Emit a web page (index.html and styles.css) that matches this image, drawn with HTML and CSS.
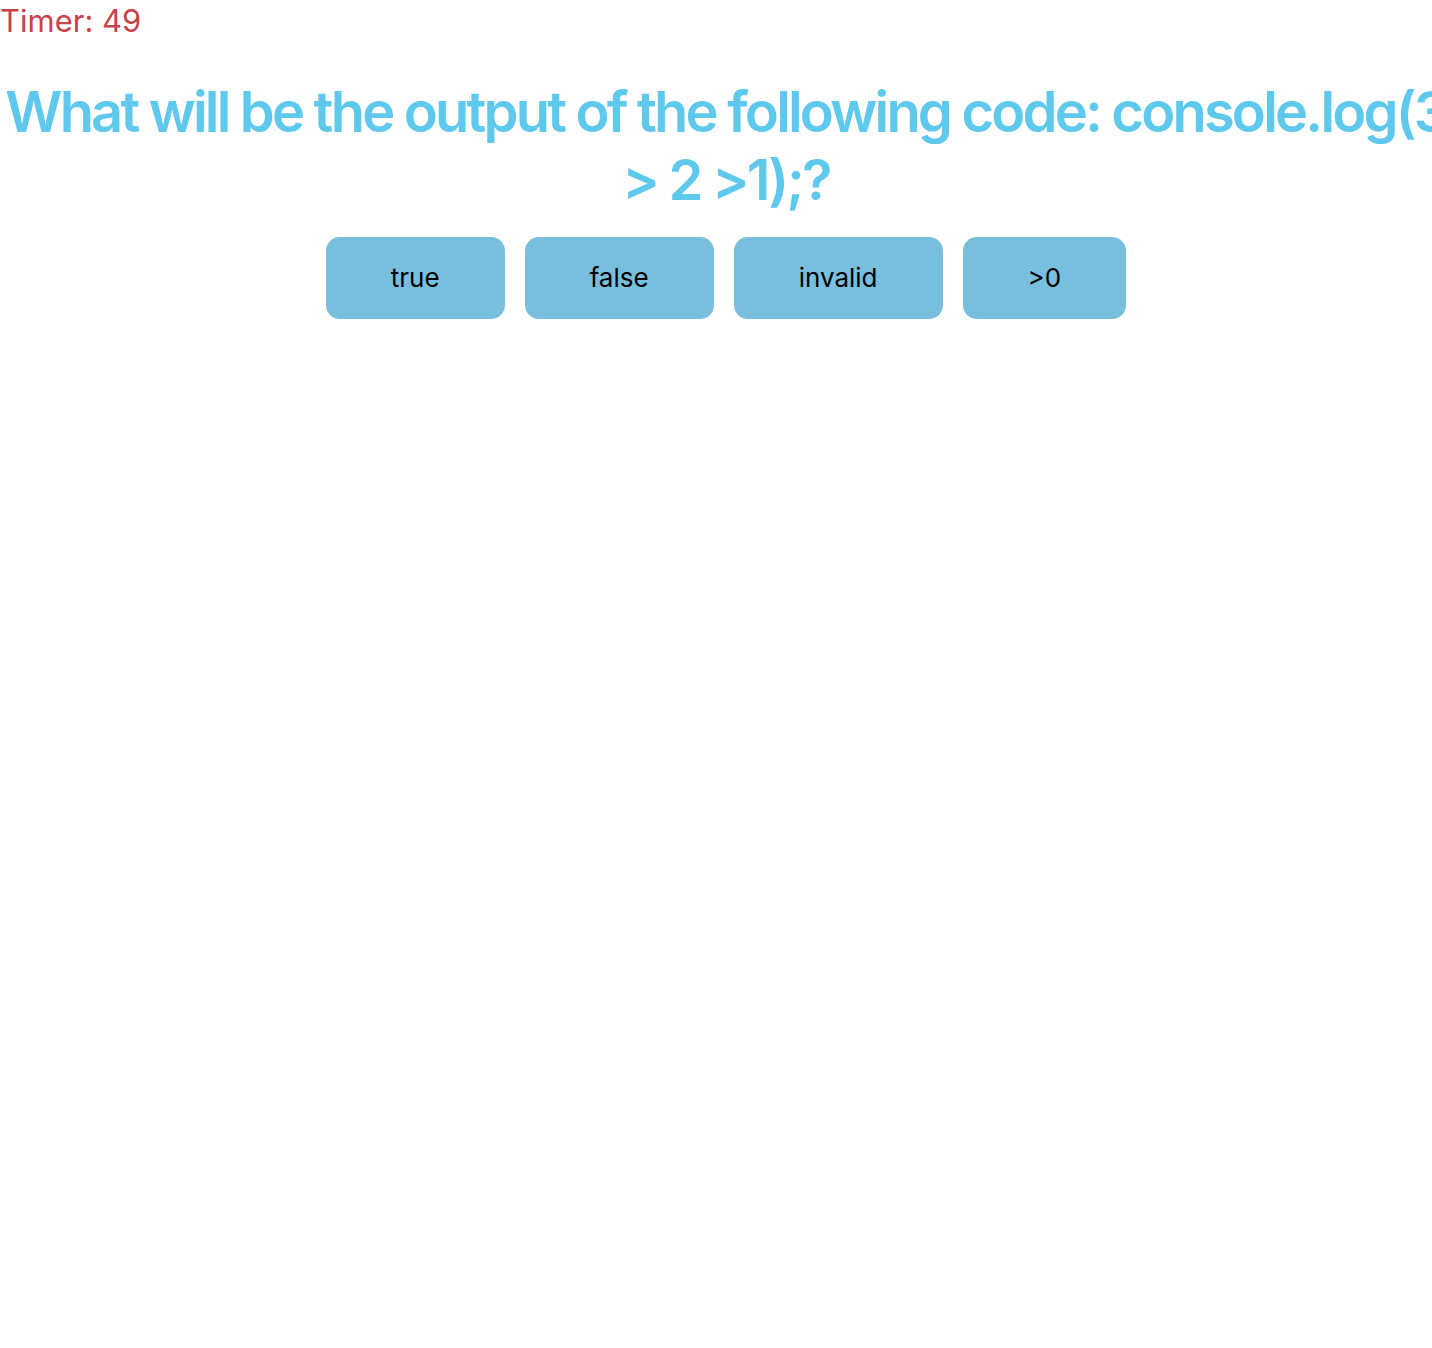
FILE: index.html
```html
<!DOCTYPE html>
<html lang="en">
<head>
<meta charset="utf-8">
<title>Quiz</title>
<link rel="stylesheet" href="styles.css">
</head>
<body>
<div class="timer">Timer: 49</div>
<div class="quiz">
  <h1 class="question">What will be the output of the following code: console.log(3 &gt; 2 &gt;1);?</h1>
  <div class="answers">
    <button class="answer">true</button>
    <button class="answer">false</button>
    <button class="answer">invalid</button>
    <button class="answer">&gt;0</button>
  </div>
</div>
</body>
</html>
```
FILE: styles.css
```css
html, body {
  margin: 0;
  padding: 0;
  background: #ffffff;
  overflow: hidden;
}
body {
  font-family: Inter, "Noto Sans", "Liberation Sans", sans-serif;
}
.timer {
  color: #c8424a;
  font-size: 31px;
  line-height: 44px;
  margin-top: -1px;
}
.quiz {
  width: 1452px;
  display: flex;
  flex-direction: column;
  align-items: center;
}
.question {
  color: #5ec8ed;
  font-size: 56px;
  font-weight: 600;
  letter-spacing: -2.8px;
  line-height: 68px;
  text-align: center;
  margin: 35px 0 23px;
  width: 100%;
}
.answers {
  display: flex;
  gap: 20px;
}
.answer {
  background: #78bedd;
  color: #000000;
  border: none;
  border-radius: 14px;
  font-family: Inter, "Noto Sans", "Liberation Sans", sans-serif;
  font-size: 26px;
  line-height: 34px;
  padding: 24px 65px;
}
```
